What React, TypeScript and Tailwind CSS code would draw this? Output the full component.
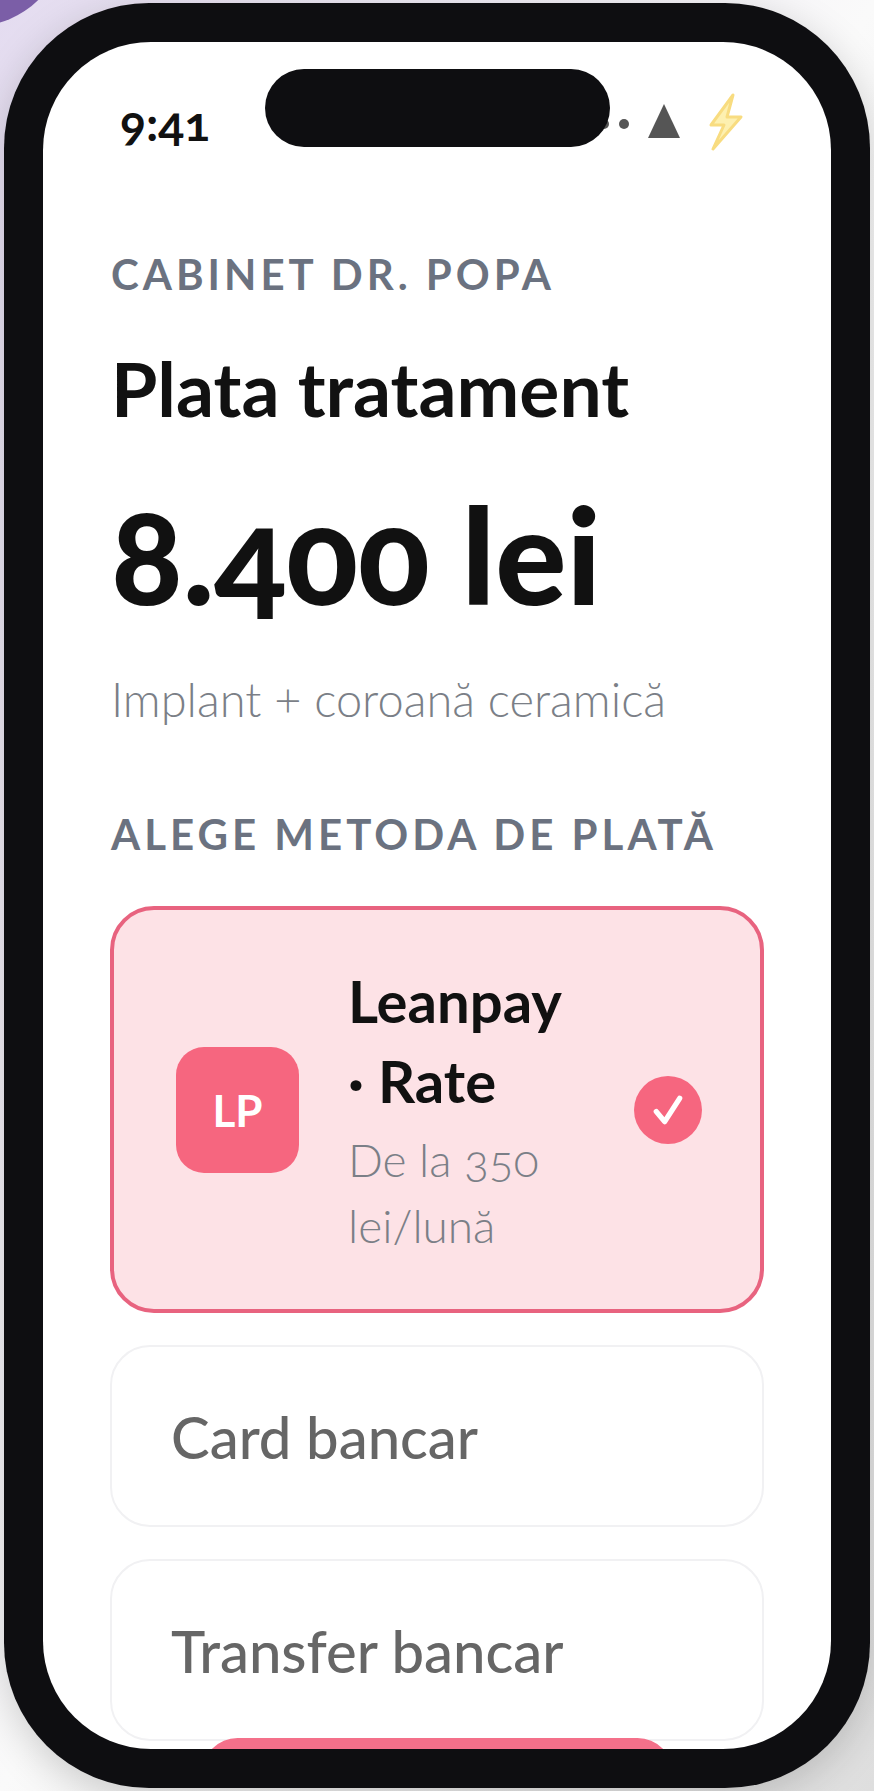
import React from 'react';

const font = { fontFamily: 'Lato, "Noto Sans", sans-serif' };

const OtherMethod = ({ label }: { label: string }) => (
  <div className="flex h-[182px] shrink-0 items-center rounded-[40px] border-2 border-[#f1f1f3] bg-white px-[59px]">
    <span className="text-[58px] font-medium text-[#666666]">{label}</span>
  </div>
);

export default function App() {
  return (
    <div
      style={font}
      className="relative h-[1791px] w-[874px] overflow-hidden bg-gradient-to-br from-[#e4dcf0] via-[#fafafa] to-[#dedede]"
    >
      {/* cerc decorativ din colt */}
      <div className="absolute left-[-115px] top-[-154px] h-[180px] w-[180px] rounded-full bg-[#7b5ea7]" />

      <div className="relative ml-[4px] mt-[3px] h-[1785px] w-[866px] rounded-[145px] bg-[#0e0e11] p-[39px] shadow-[0_10px_40px_rgba(0,0,0,0.18)]">
        <div className="relative flex h-full flex-col overflow-hidden rounded-[108px] bg-white">
          <div className="absolute left-[222px] top-[27px] z-10 h-[78px] w-[345px] rounded-[39px] bg-[#0e0e11]" />

          {/* status bar */}
          <div className="flex h-[150px] shrink-0 items-center pl-[77px] pr-[84px] pt-[14px]">
            <span className="mb-[3px] text-[48px] font-bold leading-none text-[#111111] oldstyle-nums">9:41</span>
            <div className="ml-auto flex items-center">
              <span className="mr-[10px] h-[10px] w-[10px] rounded-full bg-[#555555]" />
              <span className="h-[10px] w-[10px] rounded-full bg-[#555555]" />
              <svg width="34" height="36" viewBox="0 0 34 36" className="mb-[6px] ml-[18px]">
                <path d="M17 1 L33 35 L1 35 Z" fill="#555555" />
              </svg>
              <svg width="44" height="58" viewBox="0 0 44 58" className="mb-[4px] ml-[22px]">
                <path
                  d="M30 2 L8 32 L21 32 L10 56 L38 24 L24 24 Z"
                  fill="#fdf0b0"
                  stroke="#f8dc80"
                  strokeWidth="3"
                  strokeLinejoin="round"
                />
              </svg>
            </div>
          </div>

          {/* continut */}
          <div className="flex min-h-0 flex-1 flex-col px-[67px] pt-[57px]">
            <div className="ml-[1px] text-[42px] font-bold uppercase leading-[50px] tracking-[4px] text-[#6b7280]">
              Cabinet Dr. Popa
            </div>
            <h1 className="ml-[1px] mt-[47px] text-[75px] font-bold leading-[84px] text-[#111111]">Plata tratament</h1>
            <div className="ml-[1px] mt-[49px] text-[133px] font-black leading-[150px] text-[#111111] oldstyle-nums">
              8.400 lei
            </div>
            <p className="ml-[1px] mt-[42px] text-[47px] font-light leading-[56px] text-[#7b7f87]">
              Implant + coroană ceramică
            </p>
            <div className="ml-[1px] mt-[82px] text-[42px] font-bold uppercase leading-[50px] tracking-[4px] text-[#6b7280]">
              Alege metoda de plată
            </div>

            <div className="mt-[47px] flex flex-col gap-[32px]">
              <div className="flex h-[407px] shrink-0 items-center rounded-[44px] border-[4px] border-[#e8637f] bg-[#fde2e6] pl-[62px] pr-[58px]">
                <div className="flex h-[126px] w-[123px] shrink-0 items-center justify-center rounded-[28px] bg-[#f6667f] text-[44px] font-bold text-white">
                  LP
                </div>
                <div className="ml-[49px] w-[230px]">
                  <div className="text-[58px] font-bold leading-[80px] text-[#111111]">Leanpay · Rate</div>
                  <div className="mt-[6px] text-[46px] font-light leading-[66px] text-[#7b7f87] oldstyle-nums">
                    De la 350 lei/lună
                  </div>
                </div>
                <div className="ml-auto flex h-[68px] w-[68px] shrink-0 items-center justify-center rounded-full bg-[#f6667f]">
                  <svg width="40" height="40" viewBox="0 0 24 24" fill="none" stroke="white" strokeWidth="3.2" strokeLinecap="round" strokeLinejoin="round">
                    <path d="M5 13 L10 19 L19 5" />
                  </svg>
                </div>
              </div>
              <OtherMethod label="Card bancar" />
              <OtherMethod label="Transfer bancar" />
            </div>
          </div>

          {/* butonul ramas sub marginea ecranului */}
          <div className="absolute bottom-[-60px] left-[159px] h-[71px] w-[471px] rounded-[40px] bg-[#f4708a]" />
        </div>
      </div>
    </div>
  );
}
